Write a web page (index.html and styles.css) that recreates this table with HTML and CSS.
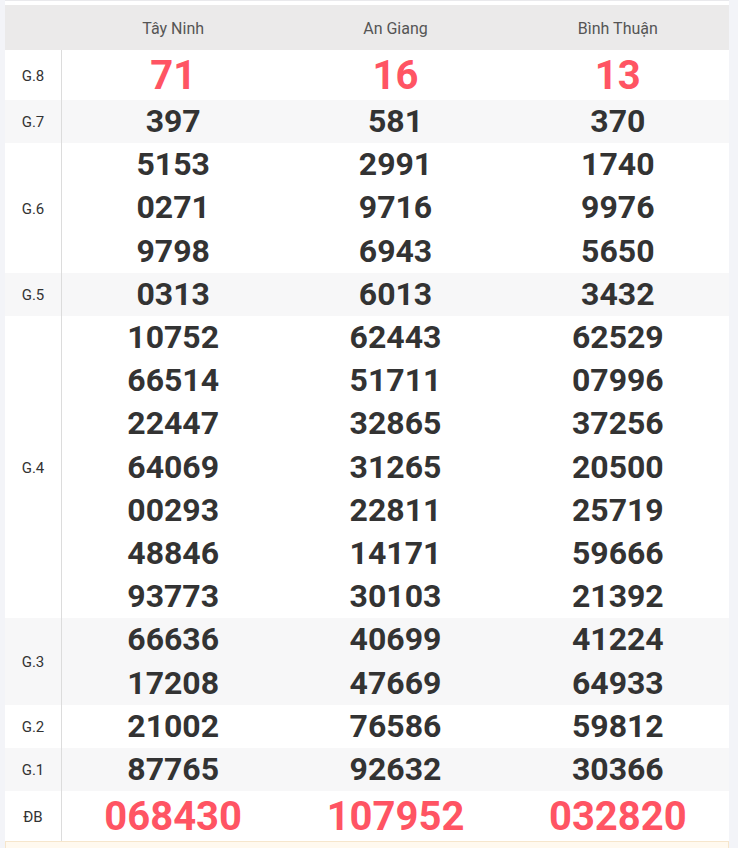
FILE: index.html
```html
<!DOCTYPE html>
<html lang="vi">
<head>
<meta charset="utf-8">
<link rel="stylesheet" href="styles.css">
</head>
<body>
<div class="wrap">
  <div class="topgap"></div>
  <div class="row head">
    <div class="lbl"></div>
    <div class="cell">Tây Ninh</div>
    <div class="cell">An Giang</div>
    <div class="cell">Bình Thuận</div>
  </div>
  <div class="row big">
    <div class="lbl">G.8</div>
    <div class="cell"><div class="n red">71</div></div>
    <div class="cell"><div class="n red">16</div></div>
    <div class="cell"><div class="n red">13</div></div>
  </div>
  <div class="row alt">
    <div class="lbl">G.7</div>
    <div class="cell"><div class="n">397</div></div>
    <div class="cell"><div class="n">581</div></div>
    <div class="cell"><div class="n">370</div></div>
  </div>
  <div class="row">
    <div class="lbl">G.6</div>
    <div class="cell"><div class="n">5153</div><div class="n">0271</div><div class="n">9798</div></div>
    <div class="cell"><div class="n">2991</div><div class="n">9716</div><div class="n">6943</div></div>
    <div class="cell"><div class="n">1740</div><div class="n">9976</div><div class="n">5650</div></div>
  </div>
  <div class="row alt">
    <div class="lbl">G.5</div>
    <div class="cell"><div class="n">0313</div></div>
    <div class="cell"><div class="n">6013</div></div>
    <div class="cell"><div class="n">3432</div></div>
  </div>
  <div class="row">
    <div class="lbl">G.4</div>
    <div class="cell"><div class="n">10752</div><div class="n">66514</div><div class="n">22447</div><div class="n">64069</div><div class="n">00293</div><div class="n">48846</div><div class="n">93773</div></div>
    <div class="cell"><div class="n">62443</div><div class="n">51711</div><div class="n">32865</div><div class="n">31265</div><div class="n">22811</div><div class="n">14171</div><div class="n">30103</div></div>
    <div class="cell"><div class="n">62529</div><div class="n">07996</div><div class="n">37256</div><div class="n">20500</div><div class="n">25719</div><div class="n">59666</div><div class="n">21392</div></div>
  </div>
  <div class="row alt">
    <div class="lbl">G.3</div>
    <div class="cell"><div class="n">66636</div><div class="n">17208</div></div>
    <div class="cell"><div class="n">40699</div><div class="n">47669</div></div>
    <div class="cell"><div class="n">41224</div><div class="n">64933</div></div>
  </div>
  <div class="row">
    <div class="lbl">G.2</div>
    <div class="cell"><div class="n">21002</div></div>
    <div class="cell"><div class="n">76586</div></div>
    <div class="cell"><div class="n">59812</div></div>
  </div>
  <div class="row alt">
    <div class="lbl">G.1</div>
    <div class="cell"><div class="n">87765</div></div>
    <div class="cell"><div class="n">92632</div></div>
    <div class="cell"><div class="n">30366</div></div>
  </div>
  <div class="row big">
    <div class="lbl">ĐB</div>
    <div class="cell"><div class="n red">068430</div></div>
    <div class="cell"><div class="n red">107952</div></div>
    <div class="cell"><div class="n red">032820</div></div>
  </div>
  <div class="note"></div>
</div>
</body>
</html>
```

FILE: styles.css
```css
html, body {
  margin: 0;
  padding: 0;
  background: #f3f4f8;
  font-family: Roboto, "Liberation Sans", Arial, sans-serif;
  color: #333;
}
.wrap {
  margin: 0 9px 0 5px;
  background: #fff;
  height: 848px;
  overflow: hidden;
}
.topgap {
  height: 4px;
  border-top: 1px solid #e9e9ec;
  background: #fff;
}
.row {
  display: grid;
  grid-template-columns: 57px 1fr 1fr 1fr;
  background: #fff;
}
.row.alt {
  background: #f7f7f8;
}
.lbl {
  display: flex;
  align-items: center;
  justify-content: center;
  font-size: 15px;
  color: #333;
  border-right: 1px solid #dcdcdc;
  padding-top: 1px;
}
.cell {
  text-align: center;
}
.n {
  font-size: 32px;
  font-weight: 700;
  line-height: 43.2px;
  color: #333;
}
.big .n {
  line-height: 50px;
}
.n.red {
  font-size: 40px;
  color: #ff5463;
  padding-top: 1px;
  margin-bottom: -1px;
}
.head {
  background: #ebeaea;
  height: 45px;
}
.head .lbl {
  border-right: none;
}
.head .cell {
  display: flex;
  align-items: center;
  justify-content: center;
  font-size: 16px;
  color: #555;
  padding-top: 2px;
}
.note {
  height: 40px;
  background: #fff9ef;
  border: 1px solid #f6e6cc;
}
```
